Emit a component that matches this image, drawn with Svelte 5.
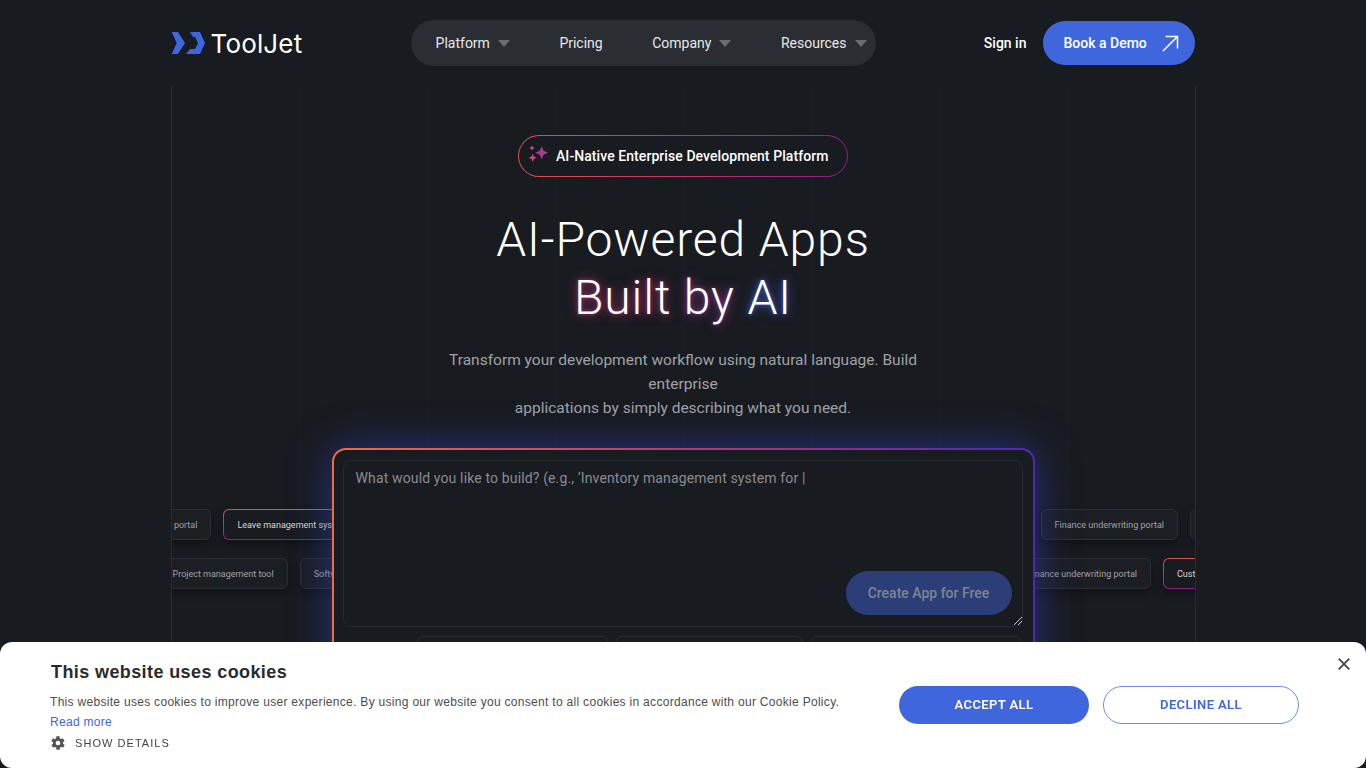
<script>
  const navItems = [
    { label: "Platform", caret: true },
    { label: "Pricing", caret: false },
    { label: "Company", caret: true },
    { label: "Resources", caret: true },
  ];

  const rowOne = [
    { text: "Customer portal" },
    { text: "Leave management system", hot: true },
    { text: "Software license tracker" },
  ];
  const rowOneRight = [
    { text: "Finance underwriting portal" },
    { text: "Inventory tracker" },
  ];
  const rowTwo = [
    { text: "Project management tool" },
    { text: "Software license tracker" },
  ];
  const rowTwoRight = [
    { text: "Finance underwriting portal" },
    { text: "Customer portal", hot: true },
  ];
</script>

<header class="topbar">
  <a class="logo" href="#top">
    <svg width="35" height="22" viewBox="0 0 35 22">
      <path d="M.7 0H7l7 11-7 11H.7l5-11z" fill="#3f66e0" />
      <path d="M19 0h10l5 11-5 11H15l4-5h5l3-6-3-6h-2z" fill="#3f66e0" />
    </svg>
    <span>ToolJet</span>
  </a>

  <nav class="menu">
    {#each navItems as item}
      <span class="menu-item">
        {item.label}
        {#if item.caret}<i class="caret"></i>{/if}
      </span>
    {/each}
  </nav>

  <div class="actions">
    <a class="signin" href="#top">Sign in</a>
    <a class="demo" href="#top">
      Book a Demo
      <svg width="17" height="17" viewBox="0 0 17 17" fill="none" stroke="#fff" stroke-width="1.500">
        <path d="M1 16L15.500 1.500M3.500 1.500h12v12" />
      </svg>
    </a>
  </div>
</header>

<main class="stage">
  <div class="hero">
    <div class="pill">
      <svg width="21" height="22" viewBox="0 0 21 22">
        <path d="M13.700 1.200l2 4.500 4.500 2-4.500 2-2 4.500-2-4.500-4.500-2 4.500-2z" fill="#a53d8a" />
        <path d="M4 .500l.9 1.600 1.600.9-1.600.9L4 5.500l-.9-1.600L1.500 3l1.600-.9z" fill="#c94480" />
        <path d="M4.700 8.700l1.200 2.800 2.800 1.200-2.800 1.200-1.200 2.800-1.200-2.800-2.800-1.200 2.800-1.200z" fill="#d9476f" />
      </svg>
      AI-Native Enterprise Development Platform
    </div>

    <h1>AI-Powered Apps<br /><span class="glow-pink">Built</span> <span class="glow-violet">by</span> <span class="glow-blue">AI</span></h1>

    <p class="lead">
      Transform your development workflow using natural language. Build enterprise<br />
      applications by simply describing what you need.
    </p>
  </div>

  <div class="chips">
    <div class="chip-row one">
      <div class="side left">
        {#each rowOne as chip}
          <span class="chip" class:hot={chip.hot}>{chip.text}</span>
        {/each}
      </div>
      <div class="side">
        {#each rowOneRight as chip}
          <span class="chip">{chip.text}</span>
        {/each}
      </div>
    </div>
    <div class="chip-row two">
      <div class="side left">
        {#each rowTwo as chip}
          <span class="chip">{chip.text}</span>
        {/each}
      </div>
      <div class="side">
        {#each rowTwoRight as chip}
          <span class="chip" class:hot={chip.hot}>{chip.text}</span>
        {/each}
      </div>
    </div>
  </div>

  <div class="prompt">
    <div class="field">
      <span class="placeholder">What would you like to build? (e.g., ‘Inventory management system for |</span>
      <button class="create">Create App for Free</button>
      <svg class="grip" width="8" height="8" viewBox="0 0 8 8" stroke="#ccc" stroke-width="1">
        <path d="M0 8L8 0M4 8l4-4" />
      </svg>
    </div>
    <div class="samples">
      <span style="width: 191px"></span>
      <span style="width: 187px"></span>
      <span style="width: 210px"></span>
    </div>
  </div>
</main>

<aside class="cookies">
  <div class="cookie-text">
    <h2>This website uses cookies</h2>
    <p>This website uses cookies to improve user experience. By using our website you consent to all cookies in accordance with our Cookie Policy.</p>
    <a href="#top">Read more</a>
    <div class="details">
      <svg width="16" height="16" viewBox="0 0 24 24" fill="#555">
        <path d="M19.400 13c.1-.3.1-.7.1-1s0-.7-.1-1l2.100-1.600c.2-.2.2-.4.100-.6l-2-3.500c-.1-.2-.4-.3-.6-.2l-2.500 1c-.5-.4-1.100-.7-1.700-1l-.4-2.700c0-.2-.2-.4-.5-.4h-4c-.3 0-.5.200-.5.400l-.4 2.700c-.6.300-1.200.6-1.700 1l-2.500-1c-.2-.1-.5 0-.6.200l-2 3.500c-.1.200-.1.500.1.600L4.600 11c-.1.300-.1.700-.1 1s0 .7.1 1l-2.100 1.600c-.2.200-.2.400-.1.600l2 3.500c.1.200.4.300.6.200l2.500-1c.5.400 1.100.7 1.700 1l.4 2.700c0 .2.200.4.500.4h4c.3 0 .5-.2.500-.4l.4-2.700c.6-.3 1.200-.6 1.700-1l2.500 1c.2.100.5 0 .6-.2l2-3.500c.1-.2.1-.5-.1-.6zM12 15.500a3.500 3.500 0 1 1 0-7 3.500 3.500 0 0 1 0 7z" />
      </svg>
      SHOW DETAILS
    </div>
  </div>
  <div class="cookie-buttons">
    <button class="accept">ACCEPT ALL</button>
    <button class="decline">DECLINE ALL</button>
  </div>
  <button class="close" aria-label="Close">
    <svg width="12" height="12" viewBox="0 0 12 12" stroke="#444" stroke-width="1.800">
      <path d="M.7.7l10.600 10.600M11.300.7L.7 11.300" />
    </svg>
  </button>
</aside>

<style>
  :global(body) {
    background: #181b20;
    font-family: Roboto, "Noto Sans", sans-serif;
    color: #fff;
    overflow: hidden;
  }

  a {
    text-decoration: none;
    color: inherit;
  }

  .topbar {
    width: 1025px;
    height: 86px;
    margin: 0 auto;
    display: flex;
    align-items: center;
    justify-content: space-between;
    box-sizing: border-box;
  }

  .logo {
    display: flex;
    align-items: center;
    gap: 5px;
    font-family: Inter, sans-serif;
    font-size: 26px;
    font-weight: 400;
    letter-spacing: 0.15px;
  }

  .menu {
    display: flex;
    align-items: center;
    width: 465px;
    height: 46px;
    box-sizing: border-box;
    padding-left: 25px;
    background: #2a2d32;
    border-radius: 23px;
    font-size: 14px;
    color: #e8e8e8;
  }

  .menu-item {
    display: flex;
    align-items: center;
    gap: 8px;
    margin-right: 49.500px;
    white-space: nowrap;
  }

  .caret {
    width: 0;
    height: 0;
    border-left: 6px solid transparent;
    border-right: 6px solid transparent;
    border-top: 7px solid #6a6c70;
  }

  .actions {
    display: flex;
    align-items: center;
    gap: 17px;
    font-size: 14px;
    font-weight: 500;
  }

  .demo {
    display: flex;
    align-items: center;
    justify-content: space-between;
    box-sizing: border-box;
    width: 152px;
    height: 44px;
    padding: 0 16px 0 20px;
    background: #3f66dd;
    border-radius: 22px;
  }

  .stage {
    position: relative;
    width: 1025px;
    height: 682px;
    margin: 0 auto;
    box-sizing: border-box;
    border-left: 1px solid #26292e;
    border-right: 1px solid #26292e;
    background-image: repeating-linear-gradient(to right, transparent 0 127px, #1b1e23 127px, #1b1e23 128px);
    overflow: hidden;
  }

  .hero {
    display: flex;
    flex-direction: column;
    align-items: center;
    padding-top: 49px;
  }

  .pill {
    display: flex;
    align-items: center;
    gap: 7px;
    box-sizing: border-box;
    width: 330px;
    height: 42px;
    padding-left: 9px;
    border: 1px solid transparent;
    border-radius: 21px;
    background:
      linear-gradient(#181b20, #181b20) padding-box,
      linear-gradient(90deg, #e2524f, #8a1f86) border-box;
    font-size: 14px;
    font-weight: 500;
    letter-spacing: 0.07px;
    white-space: nowrap;
  }

  h1 {
    margin: 34px 0 0;
    font-size: 48px;
    font-weight: 300;
    line-height: 58px;
    letter-spacing: 0.9px;
    text-align: center;
  }

  .glow-pink {
    text-shadow: 0 0 4px rgba(225, 60, 110, 0.6), 0 0 12px rgba(225, 60, 150, 0.7);
  }

  .glow-violet {
    text-shadow: 0 0 4px rgba(190, 70, 190, 0.6), 0 0 12px rgba(190, 70, 190, 0.7);
  }

  .glow-blue {
    text-shadow: 0 0 4px rgba(80, 110, 240, 0.7), 0 0 12px rgba(80, 110, 240, 0.8);
  }

  .lead {
    margin: 21px 0 0;
    width: 500px;
    font-size: 15.500px;
    line-height: 24px;
    text-align: center;
    color: #a0a2a6;
  }

  .chips {
    position: absolute;
    left: 0;
    right: 0;
    top: 423px;
    display: flex;
    flex-direction: column;
    gap: 18px;
  }

  .chip-row {
    display: flex;
    justify-content: space-between;
    height: 31px;
  }

  .side {
    display: flex;
    flex: none;
    gap: 12px;
  }

  .one .left {
    margin-left: -53px;
  }

  .one .side:not(.left) {
    width: 154px;
  }

  .two .left {
    margin-left: -13px;
  }

  .two .side:not(.left) {
    width: 181px;
  }

  .chip {
    display: flex;
    align-items: center;
    flex: none;
    box-sizing: border-box;
    height: 31px;
    padding: 0 13px;
    border: 1px solid #2c2f34;
    border-radius: 6px;
    background: #1b1e23;
    box-shadow: 0 4px 8px rgba(0, 0, 0, 0.4);
    font-size: 9px;
    color: #a0a2a6;
    white-space: nowrap;
  }

  .chip.hot {
    border-color: transparent;
    background:
      linear-gradient(#181b20, #181b20) padding-box,
      linear-gradient(180deg, #e2524f, #8a1f86) border-box;
    color: #d8d8d8;
  }

  .prompt {
    position: absolute;
    left: 160px;
    top: 362px;
    box-sizing: border-box;
    width: 703px;
    height: 320px;
    padding: 10px 10px 10px 9px;
    border-radius: 14px;
    border: 2px solid transparent;
    background:
      linear-gradient(#181b20, #181b20) padding-box,
      linear-gradient(90deg, #ed6a4c, #a63a78 55%, #4a2ab0) border-box;
    box-shadow: 0 0 40px rgba(50, 70, 210, 0.55);
  }

  .field {
    position: relative;
    box-sizing: border-box;
    height: 167px;
    padding: 9px 12px;
    border: 1px solid #26292e;
    border-radius: 8px;
    font-size: 14px;
    letter-spacing: 0.14px;
    color: #8a8c90;
  }

  .create {
    position: absolute;
    right: 10px;
    bottom: 11px;
    width: 166px;
    height: 44px;
    border: 0;
    border-radius: 22px;
    background: #2c3e78;
    color: #7f8591;
    font: 500 14px Roboto, sans-serif;
  }

  .grip {
    position: absolute;
    right: 0;
    bottom: 1px;
  }

  .samples {
    display: flex;
    justify-content: flex-end;
    gap: 8px;
    margin: 9px 2px 0 0;
  }

  .samples span {
    box-sizing: border-box;
    height: 32px;
    border: 1px solid #2c2f34;
    border-radius: 6px;
  }

  .cookies {
    position: fixed;
    left: 0;
    right: 0;
    bottom: 0;
    height: 126px;
    display: flex;
    background: #fff;
    border-radius: 12px;
    font-family: "Liberation Sans", Arial, sans-serif;
    color: #4d4d4d;
  }

  .cookie-text {
    width: 899px;
    box-sizing: border-box;
    padding: 20px 0 0 51px;
  }

  .cookie-text h2 {
    margin: 0 0 10px;
    font-size: 18px;
    font-weight: 700;
    line-height: 20px;
    letter-spacing: 0.4px;
    color: #2b2b2b;
  }

  .cookie-text p {
    margin: 0 0 0 -1px;
    font-size: 12px;
    line-height: 20px;
    letter-spacing: 0.3px;
  }

  .cookie-text a {
    margin-left: -1px;
    font-size: 12px;
    line-height: 20px;
    letter-spacing: 0.3px;
    color: #3f66dd;
  }

  .details {
    display: flex;
    align-items: center;
    gap: 9px;
    margin: 3px 0 0 -1px;
    font-size: 11px;
    letter-spacing: 1.050px;
    color: #444;
  }

  .cookie-buttons {
    display: flex;
    gap: 14px;
    padding-top: 44px;
  }

  .cookie-buttons button {
    height: 38px;
    padding-bottom: 2px;
    border-radius: 19px;
    font: 600 13px Roboto, sans-serif;
    letter-spacing: 0.4px;
  }

  .accept {
    width: 190px;
    border: 0;
    background: #3f66dd;
    color: #fff;
  }

  .decline {
    width: 196px;
    background: #fff;
    border: 1px solid #6f8de6;
    color: #3f66dd;
  }

  .close {
    position: absolute;
    right: 16px;
    top: 16px;
    padding: 0;
    border: 0;
    background: none;
    line-height: 0;
  }
</style>
